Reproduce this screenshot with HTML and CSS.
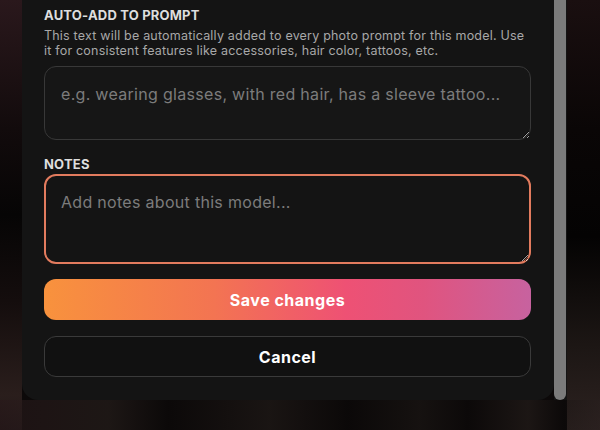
FILE: index.html
```html
<!DOCTYPE html>
<html>
<head>
<meta charset="utf-8">
<link rel="stylesheet" href="styles.css">
</head>
<body>
<div class="stage">
  <div class="modal">
    <div class="panel">
      <div class="field">
        <div class="label">AUTO-ADD TO PROMPT</div>
        <p class="desc">This text will be automatically added to every photo prompt for this model. Use it for consistent features like accessories, hair color, tattoos, etc.</p>
        <textarea class="input prompt" placeholder="e.g. wearing glasses, with red hair, has a sleeve tattoo..."></textarea>
      </div>
      <div class="field notes-field">
        <div class="label">NOTES</div>
        <textarea class="input notes" placeholder="Add notes about this model..."></textarea>
      </div>
      <div class="actions">
        <button class="btn save">Save changes</button>
        <button class="btn cancel">Cancel</button>
      </div>
    </div>
    <div class="scrollbar"><div class="thumb"></div></div>
  </div>
</div>
</body>
</html>
```
FILE: styles.css
```css
* { box-sizing: border-box; }
html, body { margin: 0; padding: 0; }
body {
  width: 600px;
  height: 430px;
  overflow: hidden;
  font-family: Inter, "Noto Sans", sans-serif;
}
.stage {
  width: 600px;
  height: 430px;
  background:
    linear-gradient(90deg, rgba(40,24,26,0.6) 0%, rgba(50,40,36,0.45) 18%, rgba(10,8,8,0.2) 28%, rgba(46,38,34,0.4) 45%, rgba(8,6,6,0.25) 58%, rgba(40,34,30,0.35) 70%, rgba(12,9,9,0.25) 78%, rgba(52,42,38,0.4) 88%, rgba(12,9,9,0.2) 94%, rgba(40,30,30,0.4) 100%) 0 400px / 600px 30px no-repeat,
    linear-gradient(180deg, #2a181c 0%, #120b0c 30%, #060505 50%, #140d0d 70%, #2a1e1c 92%, #1e1616 100%) 0 0 / 22px 430px no-repeat,
    linear-gradient(180deg, #1a0f10 0%, #0a0606 30%, #040303 55%, #1c1614 80%, #2c2220 100%) 567px 0 / 33px 430px no-repeat,
    #0c0909;
  display: flex;
  padding-left: 22px;
}
.modal {
  display: flex;
  height: 400px;
}
.panel {
  width: 532px;
  height: 400px;
  background: #141414;
  border-radius: 0 0 16px 16px;
  padding: 6px 23px 0 22px;
  display: flex;
  flex-direction: column;
}
.scrollbar {
  width: 13px;
  height: 400px;
  background: #141414;
}
.thumb {
  width: 12px;
  height: 400px;
  background: #7b7b7b;
  border-radius: 0 0 6px 6px;
}
.label {
  font-size: 13px;
  font-weight: 700;
  color: #dedede;
  letter-spacing: 0.2px;
  line-height: 18px;
}
.desc {
  margin: 4px 0 8px;
  font-size: 12.5px;
  line-height: 15px;
  letter-spacing: 0.2px;
  color: #a8a8a8;
}
.input {
  display: block;
  width: 487px;
  font-family: Inter, "Noto Sans", sans-serif;
  font-size: 16px;
  line-height: 24px;
  letter-spacing: 0.3px;
  color: #e0e0e0;
  background: #161616;
  border: 1px solid #383838;
  border-radius: 12px;
  padding: 15px 16px;
  outline: none;
}
.input::placeholder { color: #7c7c7c; }
.prompt { height: 74px; }
.notes-field { margin-top: 15px; }
.notes-field .label { margin-bottom: 1px; }
.notes {
  height: 90px;
  background: #141414;
  border: 2px solid #e27b5e;
  padding: 14px 15px;
}
.actions {
  margin-top: 15px;
  display: flex;
  flex-direction: column;
  gap: 16px;
}
.btn {
  width: 487px;
  height: 41px;
  border-radius: 12px;
  font-family: Inter, "Noto Sans", sans-serif;
  font-size: 16px;
  font-weight: 700;
  letter-spacing: 0.5px;
  color: #ffffff;
  cursor: pointer;
}
.save {
  border: none;
  background: linear-gradient(90deg, #f8923d 0%, #f37452 35%, #ee5174 62%, #e0547f 78%, #c7629f 100%);
}
.cancel {
  height: 41px;
  background: #111111;
  border: 1px solid #3a3a3a;
}
```
